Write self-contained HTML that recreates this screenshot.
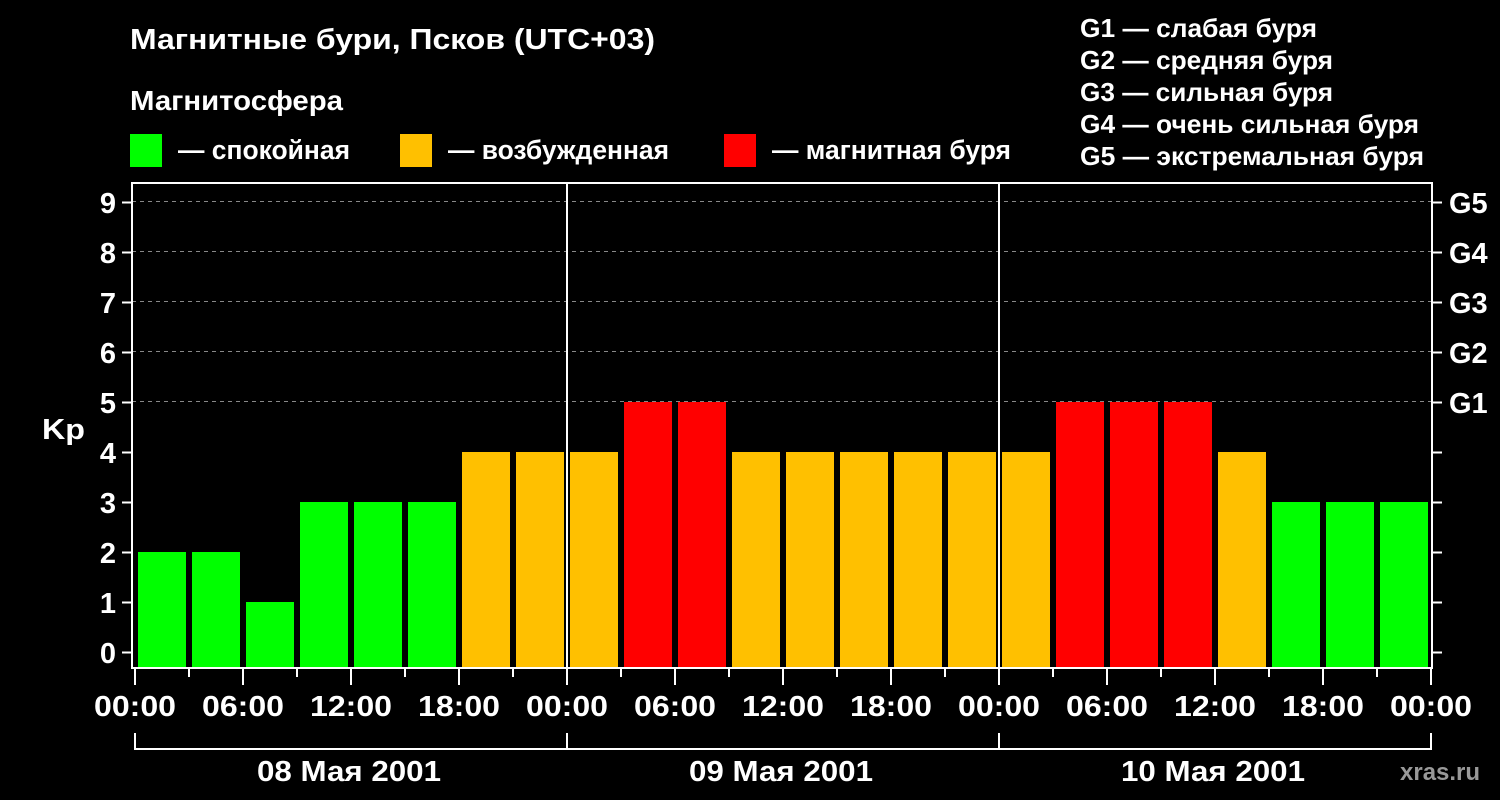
<!DOCTYPE html><html><head><meta charset="utf-8"><style>body{margin:0;background:#000}svg{display:block}text{font-family:"Liberation Sans",Arial,sans-serif;font-weight:bold;fill:#fff}</style></head><body>
<svg width="1500" height="800" viewBox="0 0 1500 800">
<rect width="1500" height="800" fill="#000"/>
<text x="130" y="49" font-size="29" textLength="525" lengthAdjust="spacingAndGlyphs">Магнитные бури, Псков (UTC+03)</text>
<text x="130" y="110" font-size="28" textLength="213" lengthAdjust="spacingAndGlyphs">Магнитосфера</text>
<rect x="130" y="134" width="32" height="33" fill="#00ff00"/><text x="178" y="159" font-size="27" textLength="172" lengthAdjust="spacingAndGlyphs">— спокойная</text>
<rect x="400" y="134" width="32" height="33" fill="#ffc000"/><text x="448" y="159" font-size="27" textLength="221" lengthAdjust="spacingAndGlyphs">— возбужденная</text>
<rect x="724" y="134" width="32" height="33" fill="#ff0000"/><text x="772" y="159" font-size="27" textLength="239" lengthAdjust="spacingAndGlyphs">— магнитная буря</text>
<g font-size="26"><text x="1080" y="37" textLength="237" lengthAdjust="spacingAndGlyphs">G1 — слабая буря</text><text x="1080" y="69" textLength="253" lengthAdjust="spacingAndGlyphs">G2 — средняя буря</text><text x="1080" y="101" textLength="253" lengthAdjust="spacingAndGlyphs">G3 — сильная буря</text><text x="1080" y="133" textLength="339" lengthAdjust="spacingAndGlyphs">G4 — очень сильная буря</text><text x="1080" y="165" textLength="344" lengthAdjust="spacingAndGlyphs">G5 — экстремальная буря</text></g>
<g stroke="#888" stroke-dasharray="4,4" stroke-width="1">
<line x1="132" y1="201.5" x2="1432" y2="201.5"/><line x1="132" y1="251.5" x2="1432" y2="251.5"/><line x1="132" y1="301.5" x2="1432" y2="301.5"/><line x1="132" y1="351.5" x2="1432" y2="351.5"/><line x1="132" y1="401.5" x2="1432" y2="401.5"/></g>
<g id="bars"></g>
<g stroke="#fff" stroke-width="2" fill="none">
<rect x="132" y="183" width="1300" height="485"/>
<line x1="567" y1="183" x2="567" y2="668"/><line x1="999" y1="183" x2="999" y2="668"/>
<path d="M135 733V749H1431V733M567 733V749M999 733V749"/>
</g>
<g font-size="29" text-anchor="end">
<text x="116" y="663">0</text><text x="116" y="613">1</text><text x="116" y="563">2</text><text x="116" y="513">3</text><text x="116" y="463">4</text><text x="116" y="413">5</text><text x="116" y="363">6</text><text x="116" y="313">7</text><text x="116" y="263">8</text><text x="116" y="213">9</text></g>
<text x="42" y="439" font-size="29" textLength="43" lengthAdjust="spacingAndGlyphs">Kp</text>
<g font-size="29"><text x="1449" y="413">G1</text><text x="1449" y="363">G2</text><text x="1449" y="313">G3</text><text x="1449" y="263">G4</text><text x="1449" y="213">G5</text></g>
<g font-size="29" id="hrs"></g>
<g font-size="29" text-anchor="middle">
<text x="349" y="781" textLength="184" lengthAdjust="spacingAndGlyphs">08 Мая 2001</text><text x="781" y="781" textLength="184" lengthAdjust="spacingAndGlyphs">09 Мая 2001</text><text x="1213" y="781" textLength="184" lengthAdjust="spacingAndGlyphs">10 Мая 2001</text></g>
<text x="1400" y="780" font-size="24" style="fill:#999">xras.ru</text>
<g stroke="#fff" stroke-width="2" id="ticks"></g>
</svg>
<script>
var v=[2,2,1,3,3,3,4,4,4,5,5,4,4,4,4,4,4,5,5,5,4,3,3,3];
var s='';v.forEach(function(k,i){var c=k>=5?'#ff0000':k==4?'#ffc000':'#00ff00';var y=652-50*k;s+='<rect x="'+(138+54*i)+'" y="'+y+'" width="48" height="'+(668-y)+'" fill="'+c+'"/>';});
document.getElementById('bars').innerHTML=s;
var t='';for(var k=0;k<=9;k++){var y=652-50*k+0.5;t+='<line x1="122" y1="'+y+'" x2="131" y2="'+y+'"/><line x1="1433" y1="'+y+'" x2="1442" y2="'+y+'"/>';}
for(var i=0;i<=24;i++){var x=135+54*i;t+='<line x1="'+x+'" y1="669" x2="'+x+'" y2="'+(i%2?677:685)+'"/>';}
document.getElementById('ticks').innerHTML=t;
var L=['00:00','06:00','12:00','18:00'],h='';for(var j=0;j<=12;j++){var x=135+108*j;h+='<text x="'+(x-41)+'" y="716" textLength="82" lengthAdjust="spacingAndGlyphs">'+L[j%4]+'</text>';}
document.getElementById('hrs').innerHTML=h;
</script>
</body></html>
